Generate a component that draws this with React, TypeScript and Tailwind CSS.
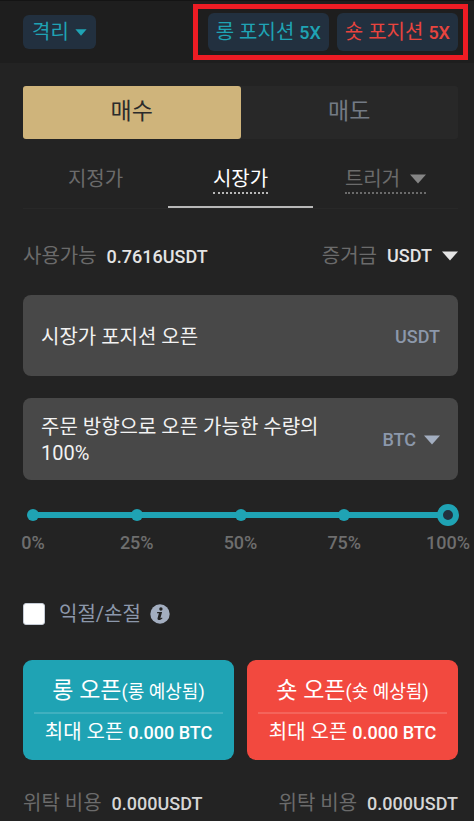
import React, { useState } from 'react';

const STOPS = [0, 25, 50, 75, 100];

function Caret({ className = '' }: { className?: string }) {
  return (
    <svg className={`pointer-events-none shrink-0 ${className}`} viewBox="0 0 16 10" fill="currentColor" aria-hidden="true">
      <path d="M0 0.5h16L8 9.5z" />
    </svg>
  );
}

function InfoIcon() {
  return (
    <svg className="h-5 w-5" viewBox="0 0 20 20" aria-hidden="true">
      <circle cx="10" cy="10" r="9.7" fill="#a3aec0" />
      <circle cx="10.9" cy="5" r="1.7" fill="#232323" />
      <path d="M7.2 8h4.9l-1.6 5.8c-.1.5.5.5 1.5-.3l.5.7c-1.3 1.4-2.6 1.9-3.8 1.7-1.1-.2-1.4-1-1.1-2l1.3-4.7H7z" fill="#232323" />
    </svg>
  );
}

function Num({ children, className = '' }: { children: React.ReactNode; className?: string }) {
  return <span className={`text-[18px] font-medium ${className}`}>{children}</span>;
}

function OpenButton({ side, color }: { side: string; color: string }) {
  return (
    <button type="button" className={`flex h-[100px] flex-1 flex-col items-stretch rounded-[9px] px-[11px] pt-[10px] text-white ${color}`}>
      <span className="flex h-11 items-center justify-center whitespace-nowrap border-b-2 border-white/15">
        <span className="text-[23px]">
          {side} 오픈<span className="text-[18px]">({side} 예상됨)</span>
        </span>
      </span>
      <span className="flex h-9 items-center justify-center whitespace-nowrap">
        <span>최대 오픈 <Num>0.000 BTC</Num></span>
      </span>
    </button>
  );
}

function Cost() {
  return (
    <p className="flex items-baseline gap-[10px] whitespace-nowrap text-[#6b6b6b]">
      위탁 비용 <Num className="text-[#d6d6d6]">0.000USDT</Num>
    </p>
  );
}

export default function App() {
  const [percent, setPercent] = useState(100);

  return (
    <div className="min-h-screen border-t border-[#141414] bg-[#232323] font-['Roboto','Noto_Sans_CJK_KR',sans-serif] text-[20px] leading-[26px]">
      <header className="flex h-[62px] items-center justify-between bg-[#1e1e1e] pl-[23px] pr-[6px]">
        <label className="flex h-[34px] items-center gap-[6px] rounded-[6px] bg-[#22303f] px-[9px] text-[#1fa3b4]">
          <select aria-label="마진 모드" className="appearance-none bg-transparent field-sizing-content">
            <option>격리</option>
          </select>
          <Caret className="h-[7px] w-3" />
        </label>
        <div className="flex h-14 items-center gap-2 border-[5px] border-[#ed1c24] pl-[10px] pr-[5px]">
          <button type="button" className="h-[38px] rounded-[6px] bg-[#22303f] px-2 whitespace-nowrap text-[#1fa3b4]">
            롱 포지션 <Num>5X</Num>
          </button>
          <button type="button" className="h-[38px] rounded-[6px] bg-[#22303f] px-2 whitespace-nowrap text-[#e8443e]">
            숏 포지션 <Num>5X</Num>
          </button>
        </div>
      </header>

      <main className="pt-[23px] pr-4 pl-[23px]">
        <div className="flex h-[53px] rounded-[3px] bg-[#282828] text-[23px]">
          <button type="button" className="flex-1 rounded-[3px] bg-[#cfb47b] pb-[2px] text-[#2b2b2b]">매수</button>
          <button type="button" className="flex-1 pb-[2px] text-[#737a85]">매도</button>
        </div>

        <nav className="flex h-[70px] items-stretch border-b border-[#282828] text-[#6b6b6b]">
          <button type="button" className="flex-1 border-b-2 border-transparent pt-[14px]">
            <span className="mx-auto block h-[28px] w-fit">지정가</span>
          </button>
          <button type="button" className="flex-1 border-b-2 border-[#b8b8b8] pt-[14px] text-white">
            <span className="mx-auto block h-[28px] w-fit border-b-2 border-dotted border-[#b8b8b8]">시장가</span>
          </button>
          <div className="flex flex-1 items-center justify-center border-b-2 border-transparent pt-[14px]">
            <label className="flex h-[28px] items-center gap-[10px] border-b-2 border-dotted border-[#6b6b6b]">
              <select aria-label="트리거" className="appearance-none bg-transparent field-sizing-content">
                <option>트리거</option>
              </select>
              <Caret className="h-[10px] w-4 text-[#858585]" />
            </label>
          </div>
        </nav>

        <div className="flex h-[86px] items-center justify-between pt-2 whitespace-nowrap">
          <p className="flex items-baseline gap-[10px] text-[#6b6b6b]">
            사용가능 <Num className="text-[#e4e4e4]">0.7616USDT</Num>
          </p>
          <label className="flex items-center gap-[10px] text-[#6b6b6b]">
            증거금
            <select className="appearance-none bg-transparent text-[18px] font-medium text-[#e4e4e4] field-sizing-content">
              <option>USDT</option>
            </select>
            <Caret className="h-[10px] w-4 text-[#e4e4e4]" />
          </label>
        </div>

        <div className="flex flex-col gap-[22px]">
          <label className="flex h-[81px] items-center gap-2 rounded-[8px] bg-[#484848] px-[18px] pt-[2px]">
            <input aria-label="주문 가격" readOnly value="시장가 포지션 오픈" className="min-w-0 flex-1 bg-transparent text-[#f2f2f2] outline-none" />
            <Num className="text-[#8c98ab]">USDT</Num>
          </label>
          <div className="flex h-[82px] items-center gap-6 rounded-[8px] bg-[#484848] px-[18px] pt-[2px]">
            <textarea
              aria-label="주문 수량"
              readOnly
              rows={2}
              value={`주문 방향으로 오픈 가능한 수량의 ${percent}%`}
              className="min-w-0 flex-1 resize-none overflow-hidden bg-transparent text-[#f2f2f2] outline-none"
            />
            <label className="flex items-center gap-2 text-[#8c98ab]">
              <select aria-label="수량 단위" className="appearance-none bg-transparent text-[18px] font-medium field-sizing-content">
                <option>BTC</option>
              </select>
              <Caret className="h-[10px] w-4 text-[#a3aec0]" />
            </label>
          </div>
        </div>

        <div className="relative mt-6 h-[68px]">
          <div className="flex justify-between pr-1 pl-1">
            {STOPS.map((stop) => (
              <div key={stop} className="flex w-3 flex-col items-center">
                <span className="flex h-[22px] items-center">
                  <span className="h-3 w-3 rounded-full bg-[#1fa3b4]" />
                </span>
                <span className="mt-1 text-[18px] font-medium whitespace-nowrap text-[#6e6e6e]">{stop}%</span>
              </div>
            ))}
          </div>
          <input
            type="range"
            aria-label="주문 비율"
            min={0}
            max={100}
            step={25}
            value={percent}
            onChange={(e) => setPercent(Number(e.target.value))}
            className="absolute inset-x-[-1px] top-0 h-[22px] appearance-none bg-transparent bg-[linear-gradient(#1fa3b4,#1fa3b4)] bg-[length:calc(100%-20px)_6px] bg-center bg-no-repeat [&::-webkit-slider-thumb]:h-[22px] [&::-webkit-slider-thumb]:w-[22px] [&::-webkit-slider-thumb]:appearance-none [&::-webkit-slider-thumb]:rounded-full [&::-webkit-slider-thumb]:border-[6px] [&::-webkit-slider-thumb]:border-[#1fa3b4] [&::-webkit-slider-thumb]:bg-[#22303f]"
          />
        </div>

        <div className="mt-7 flex h-[28px] items-center gap-[9px]">
          <label className="flex items-center gap-[14px] text-[#8c98ab]">
            <input type="checkbox" className="h-[22px] w-[22px] appearance-none rounded-[3px] border border-[#c5cbd5] bg-white checked:bg-[#1fa3b4]" />
            익절/손절
          </label>
          <button type="button" aria-label="익절/손절 안내">
            <InfoIcon />
          </button>
        </div>

        <div className="mt-8 flex gap-[13px]">
          <OpenButton side="롱" color="bg-[#1fa3b4]" />
          <OpenButton side="숏" color="bg-[#f2493f]" />
        </div>

        <div className="mt-[30px] flex justify-between">
          <Cost />
          <Cost />
        </div>
      </main>
    </div>
  );
}
